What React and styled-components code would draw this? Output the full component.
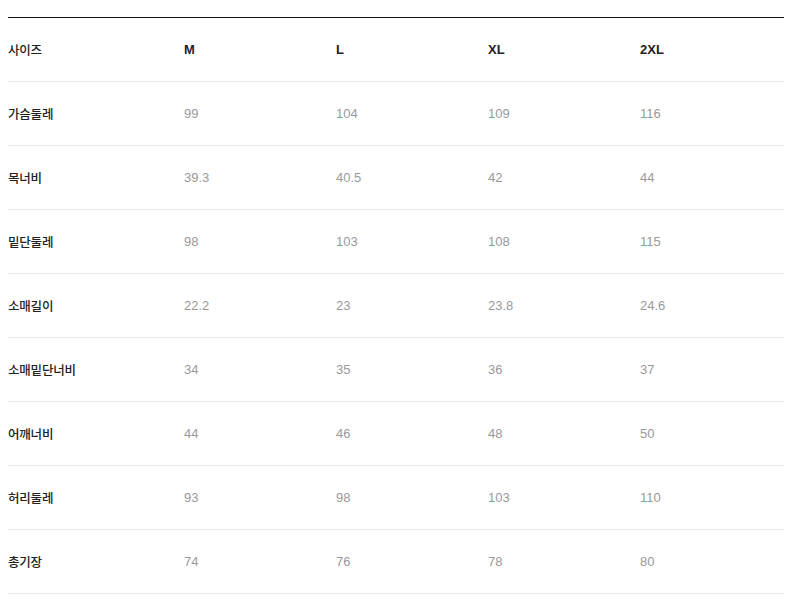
import React from "react";
import styled, { createGlobalStyle } from "styled-components";

const Global = createGlobalStyle`
	body {
		margin: 0;
		background: #fff;
		font-family: "Liberation Sans", "Noto Sans CJK KR", sans-serif;
	}
`;

const Page = styled.div`
	padding: 17px 8px 0 8px;
`;

const Table = styled.div`
	width: 776px;
	border-top: 1px solid #111;
`;

const Row = styled.div`
	display: grid;
	grid-template-columns: 176px 152px 152px 152px 1fr;
	align-items: center;
	height: 63px;
	border-bottom: 1px solid #e8e8e8;
`;

const Label = styled.div`
	font-family: "Noto Sans CJK KR", sans-serif;
	font-size: 12.5px;
	font-weight: 500;
	color: #222;
	letter-spacing: -0.2px;
`;

const Cell = styled.div`
	font-size: 13px;
	color: ${p => (p.$head ? "#222" : "#999")};
	font-weight: ${p => (p.$head ? 700 : 400)};
`;

const sizes = ["M", "L", "XL", "2XL"];

const rows = [
	["가슴둘레", "99", "104", "109", "116"],
	["목너비", "39.3", "40.5", "42", "44"],
	["밑단둘레", "98", "103", "108", "115"],
	["소매길이", "22.2", "23", "23.8", "24.6"],
	["소매밑단너비", "34", "35", "36", "37"],
	["어깨너비", "44", "46", "48", "50"],
	["허리둘레", "93", "98", "103", "110"],
	["총기장", "74", "76", "78", "80"],
];

export default function App() {
	return (
		<Page>
			<Global />
			<Table>
				<Row>
					<Label>사이즈</Label>
					{sizes.map(s => (
						<Cell key={s} $head>
							{s}
						</Cell>
					))}
				</Row>
				{rows.map(([label, ...vals]) => (
					<Row key={label}>
						<Label>{label}</Label>
						{vals.map((v, i) => (
							<Cell key={i}>{v}</Cell>
						))}
					</Row>
				))}
			</Table>
		</Page>
	);
}
